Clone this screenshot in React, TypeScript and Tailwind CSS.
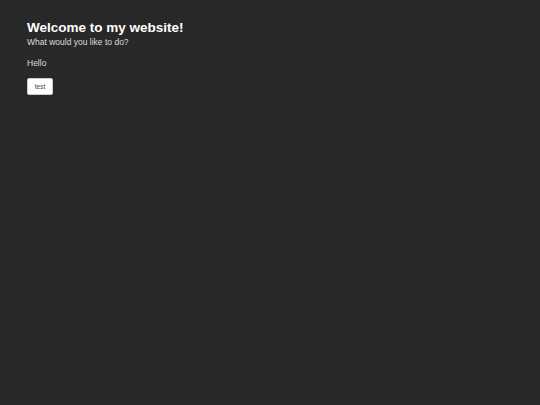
export default function App() {
  return (
    <div className="min-h-[405px] w-full bg-[#282828] px-[27px] pt-[20px] text-[#eeeeee] font-['Liberation_Sans',Arial,sans-serif]">
      <h1 className="text-[13.5px] font-bold leading-[15px] text-white">Welcome to my website!</h1>
      <p className="mt-[2px] text-[8.5px] leading-[10px] text-[#dddddd]">What would you like to do?</p>
      <p className="mt-[11px] text-[8.5px] leading-[10px] text-[#dddddd]">Hello</p>
      <button className="mt-[10px] h-[17px] w-[26px] rounded-[2px] border border-[#cccccc] bg-white text-[6.5px] text-[#444444]">
        test
      </button>
    </div>
  );
}
